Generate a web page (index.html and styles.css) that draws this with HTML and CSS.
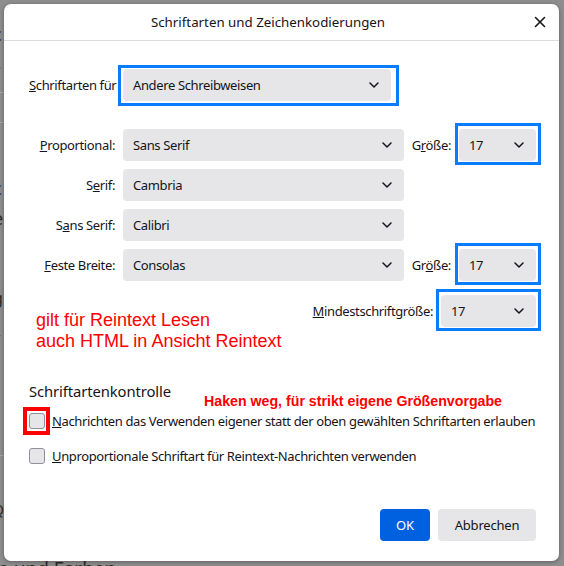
FILE: index.html
```
<!DOCTYPE html>
<html lang="de">
<head>
<meta charset="utf-8">
<title>Schriftarten und Zeichenkodierungen</title>
<link rel="stylesheet" href="styles.css">
</head>
<body>
<div class="backdrop">
  <div class="bg-page">
    <span class="frag f1">c</span>
    <span class="frag f2">r</span>
    <span class="bg-line l1"></span>
    <span class="bg-line l2"></span>
    <span class="frag f3">c</span>
    <span class="frag f4">e</span>
    <span class="frag f5"><u>g</u></span>
    <span class="frag f6">r</span>
    <span class="frag f7">i</span>
    <span class="bg-line l3"></span>
    <span class="frag f8">Q</span>
    <span class="frag bottom-text">n und Farben</span>
  </div>
</div>

<div class="dialog">
  <header class="dlg-head">
    <h1 class="dlg-title">Schriftarten und Zeichenkodierungen</h1>
    <button class="close" aria-label="Schließen">
      <svg width="12" height="12" viewBox="0 0 12 12"><path d="M1.5 1.5 L10.5 10.5 M10.5 1.5 L1.5 10.5" stroke="#15141a" stroke-width="1.6" fill="none" stroke-linecap="round"/></svg>
    </button>
  </header>

  <div class="dlg-body">
    <div class="first-row">
      <span class="lbl lead"><u>S</u>chriftarten für</span>
      <div class="select first"><span>Andere Schreibweisen</span><svg class="chev" width="10" height="6" viewBox="0 0 10 6"><path d="M1 1 L5 5 L9 1" stroke="#15141a" stroke-width="1.5" fill="none" stroke-linecap="round" stroke-linejoin="round"/></svg></div>
    </div>

    <div class="font-grid">
      <span class="lbl row-label"><u>P</u>roportional:</span>
      <div class="select"><span>Sans Serif</span><svg class="chev" width="10" height="6" viewBox="0 0 10 6"><path d="M1 1 L5 5 L9 1" stroke="#15141a" stroke-width="1.5" fill="none" stroke-linecap="round" stroke-linejoin="round"/></svg></div>
      <span class="lbl size-label">G<u>r</u>öße:</span>
      <div class="select size"><span>17</span><svg class="chev" width="10" height="6" viewBox="0 0 10 6"><path d="M1 1 L5 5 L9 1" stroke="#15141a" stroke-width="1.5" fill="none" stroke-linecap="round" stroke-linejoin="round"/></svg></div>

      <span class="lbl row-label">S<u>e</u>rif:</span>
      <div class="select"><span>Cambria</span><svg class="chev" width="10" height="6" viewBox="0 0 10 6"><path d="M1 1 L5 5 L9 1" stroke="#15141a" stroke-width="1.5" fill="none" stroke-linecap="round" stroke-linejoin="round"/></svg></div>
      <span></span><span></span>

      <span class="lbl row-label">S<u>a</u>ns Serif:</span>
      <div class="select"><span>Calibri</span><svg class="chev" width="10" height="6" viewBox="0 0 10 6"><path d="M1 1 L5 5 L9 1" stroke="#15141a" stroke-width="1.5" fill="none" stroke-linecap="round" stroke-linejoin="round"/></svg></div>
      <span></span><span></span>

      <span class="lbl row-label"><u>F</u>este Breite:</span>
      <div class="select"><span>Consolas</span><svg class="chev" width="10" height="6" viewBox="0 0 10 6"><path d="M1 1 L5 5 L9 1" stroke="#15141a" stroke-width="1.5" fill="none" stroke-linecap="round" stroke-linejoin="round"/></svg></div>
      <span class="lbl size-label">Gr<u>ö</u>ße:</span>
      <div class="select size"><span>17</span><svg class="chev" width="10" height="6" viewBox="0 0 10 6"><path d="M1 1 L5 5 L9 1" stroke="#15141a" stroke-width="1.5" fill="none" stroke-linecap="round" stroke-linejoin="round"/></svg></div>
    </div>

    <div class="min-row">
      <span class="lbl"><u>M</u>indestschriftgröße:</span>
      <div class="select min"><span>17</span><svg class="chev" width="10" height="6" viewBox="0 0 10 6"><path d="M1 1 L5 5 L9 1" stroke="#15141a" stroke-width="1.5" fill="none" stroke-linecap="round" stroke-linejoin="round"/></svg></div>
    </div>

    <h2 class="section-title">Schriftartenkontrolle</h2>

    <label class="check first-check"><span class="box"></span><span><u>N</u>achrichten das Verwenden eigener statt der oben gewählten Schriftarten erlauben</span></label>
    <label class="check second-check"><span class="box"></span><span><u>U</u>nproportionale Schriftart für Reintext-Nachrichten verwenden</span></label>
  </div>

  <footer class="dlg-foot">
    <button class="btn primary">OK</button>
    <button class="btn">Abbrechen</button>
  </footer>

  <span class="mark blue m1"></span>
  <span class="mark blue m2"></span>
  <span class="mark blue m3"></span>
  <span class="mark blue m4"></span>
  <span class="mark red m5"></span>
  <div class="note note-left">gilt für Reintext Lesen<br>auch HTML in Ansicht Reintext</div>
  <div class="note note-right">Haken weg, für strikt eigene Größenvorgabe</div>
</div>
</body>
</html>
```

FILE: styles.css
```
* { box-sizing: border-box; }

html, body {
  margin: 0;
  padding: 0;
}

body {
  width: 564px;
  height: 566px;
  overflow: hidden;
  position: relative;
  background: #8e8e8e;
  font-family: "Noto Sans", "Open Sans", sans-serif;
  color: #15141a;
}

.backdrop {
  position: absolute;
  inset: 0;
  background: #8e8e8e;
}

.bg-page {
  position: relative;
  width: 100%;
  height: 100%;
  font-size: 18px;
  color: #2b2b2b;
}

.frag {
  position: absolute;
  left: -7px;
  line-height: 20px;
}
.f1 { top: 24px; }
.f2 { top: 60px; }
.f3 { top: 178px; }
.f4 { top: 208px; }
.f5 { top: 288px; font-size: 16px; }
.f6 { top: 328px; }
.f7 { top: 365px; }
.f8 { top: 500px; font-size: 14px; }
.bottom-text {
  left: -3px;
  top: 559px;
  font-size: 19px;
}

.bg-line {
  position: absolute;
  left: 0;
  width: 10px;
  height: 1px;
  background: #a8a8a8;
}
.l1 { top: 92px; }
.l2 { top: 122px; }
.l3 { top: 455px; }

.dialog {
  position: absolute;
  left: 4px;
  top: 4px;
  width: 555px;
  height: 557px;
  background: #fff;
  border-radius: 7px;
  box-shadow: 0 1px 4px rgba(0,0,0,0.35);
  display: flex;
  flex-direction: column;
  font-size: 13px;
  letter-spacing: -0.37px;
}

.dlg-head {
  height: 37px;
  border-bottom: 1px solid #dcdcdc;
  display: flex;
  align-items: center;
  justify-content: center;
  padding-right: 27px;
  position: relative;
}

.dlg-title {
  margin: 0;
  font-size: 13.3px;
  font-weight: 400;
  line-height: 18px;
  letter-spacing: 0;
}

.close {
  position: absolute;
  right: 12px;
  top: 11px;
  width: 14px;
  height: 14px;
  padding: 0;
  border: 0;
  background: transparent;
  display: flex;
  align-items: center;
  justify-content: center;
}

.dlg-body {
  padding: 28px 23px 0 25px;
  display: flex;
  flex-direction: column;
}

.first-row {
  display: flex;
  align-items: center;
  gap: 8px;
  height: 32px;
  margin-bottom: 28px;
}

.first-row .lead {
  width: 86px;
}

.font-grid {
  display: grid;
  grid-template-columns: 86px 281px 39px 77px;
  grid-auto-rows: 32px;
  column-gap: 8px;
  row-gap: 8px;
  align-items: center;
}

.lbl {
  white-space: nowrap;
  line-height: 18px;
}

.row-label, .size-label {
  justify-self: end;
}

.select {
  height: 32px;
  background: #e6e6e8;
  border-radius: 4px;
  display: flex;
  align-items: center;
  justify-content: space-between;
  padding: 0 12px 0 10px;
}

.select.first {
  width: 268px;
}

.chev { flex: none; }

.min-row {
  margin-top: 14px;
  display: flex;
  justify-content: flex-end;
  align-items: center;
  gap: 8px;
}

.select.min { width: 95px; }

.section-title {
  margin: 54px 0 0 0;
  font-size: 14.8px;
  font-weight: 400;
  line-height: 20px;
  letter-spacing: -0.1px;
}

.check {
  display: flex;
  align-items: center;
  gap: 7px;
  height: 24px;
  white-space: nowrap;
}
.first-check { margin-top: 8px; }
.second-check { margin-top: 11px; }

.box {
  width: 16px;
  height: 16px;
  flex: none;
  border: 1px solid #8f8f9d;
  border-radius: 3px;
  background: #e6e6e8;
}

.dlg-foot {
  margin-top: auto;
  padding: 0 23px 20px 0;
  display: flex;
  justify-content: flex-end;
  gap: 8px;
}

.btn {
  height: 32px;
  border: 0;
  border-radius: 4px;
  background: #e6e6e8;
  color: #15141a;
  font-family: inherit;
  font-size: 13px;
  letter-spacing: -0.2px;
  padding: 0 16px;
  min-width: 98px;
}

.btn.primary {
  background: #0061e0;
  color: #fff;
  min-width: 50px;
  padding: 0 14px;
}

.mark {
  position: absolute;
  border-style: solid;
  pointer-events: none;
}
.blue { border-color: #0a7cff; border-width: 3px; }
.red { border-color: #ff0000; border-width: 4px; }
.m1 { left: 114px; top: 61px; width: 281px; height: 41px; }
.m2 { left: 451px; top: 119px; width: 86px; height: 42px; }
.m3 { left: 451px; top: 239px; width: 86px; height: 42px; }
.m4 { left: 432px; top: 285px; width: 105px; height: 42px; }
.m5 { left: 19px; top: 403px; width: 27px; height: 28px; }

.note {
  position: absolute;
  color: #ff0000;
  font-family: "Liberation Sans", Arial, sans-serif;
  white-space: nowrap;
  letter-spacing: 0;
}
.note-left {
  left: 32px;
  top: 306px;
  font-size: 18px;
  line-height: 21px;
}
.note-right {
  left: 200px;
  top: 389px;
  font-size: 14.2px;
  font-weight: 700;
  line-height: 16px;
}
```
